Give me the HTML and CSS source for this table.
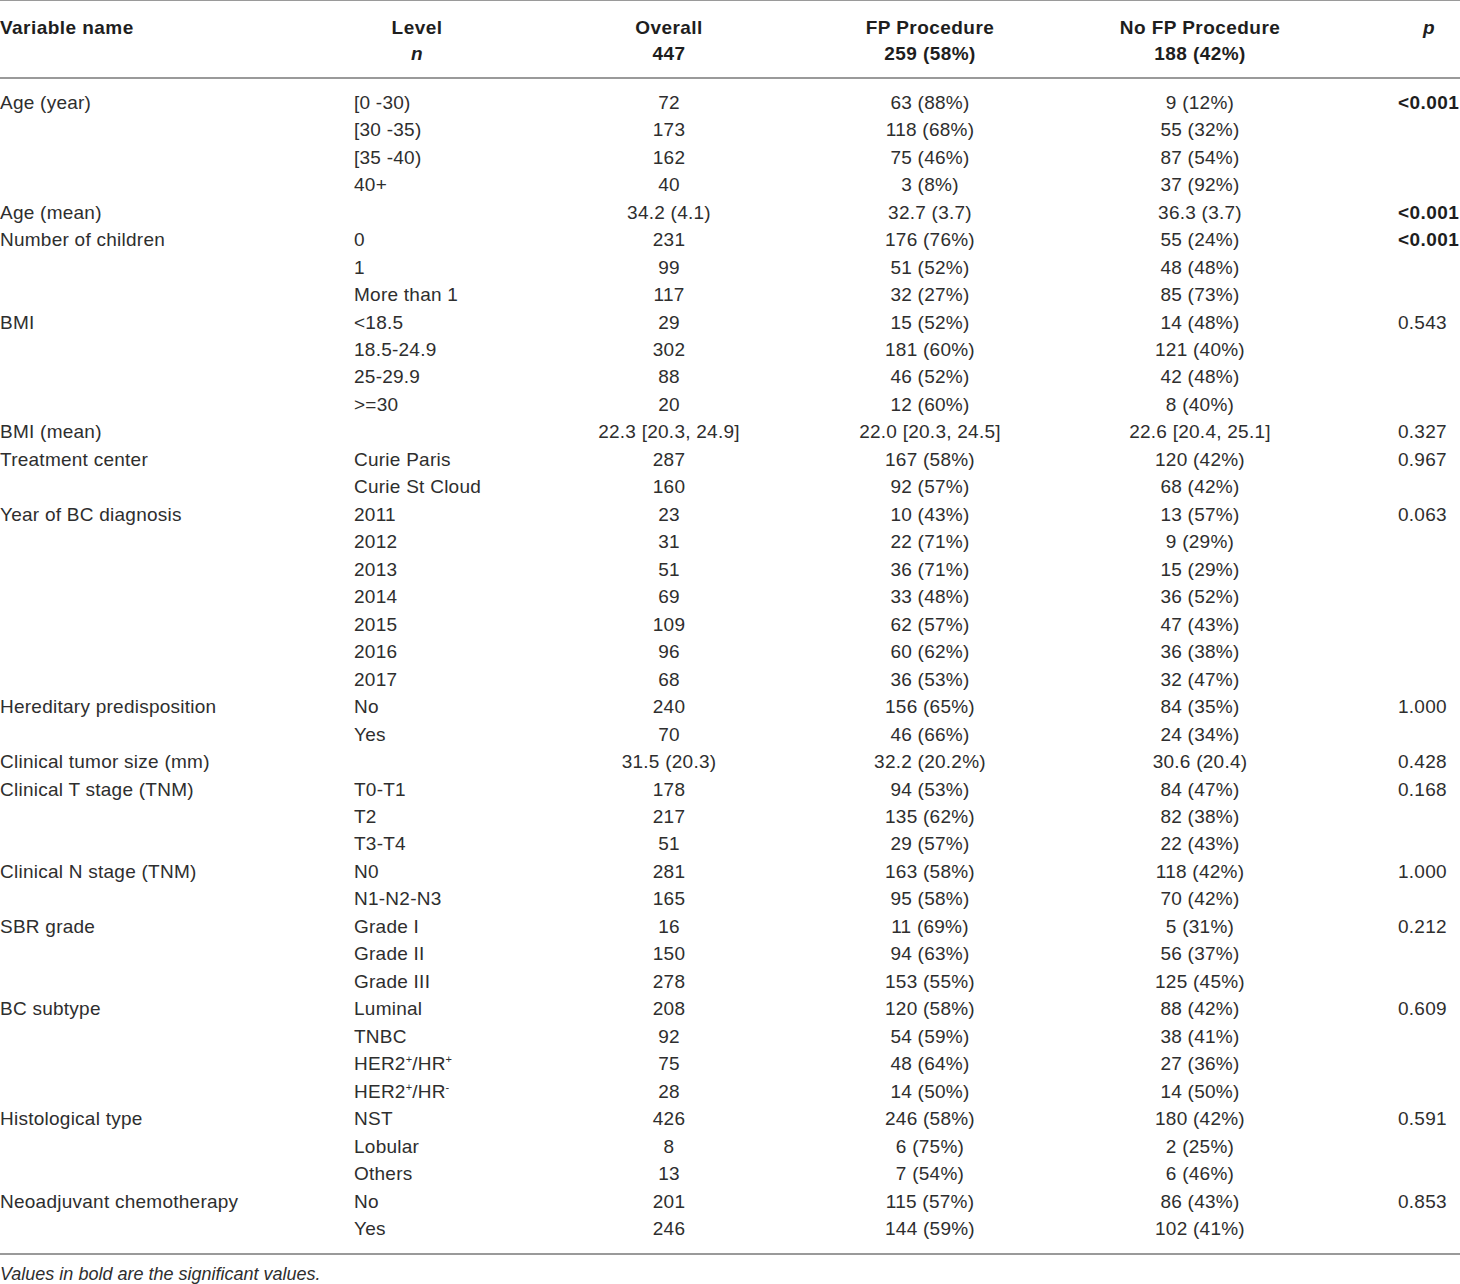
FILE: index.html
```html
<!DOCTYPE html>
<html>
<head>
<meta charset="utf-8">
<link rel="stylesheet" href="styles.css">
</head>
<body>
<div class="table">
  <div class="thead">
    <div class="row">
      <div class="c1 b">Variable name</div>
      <div class="c2 b hc">Level</div>
      <div class="c3 b">Overall</div>
      <div class="c4 b">FP Procedure</div>
      <div class="c5 b">No FP Procedure</div>
      <div class="c6 b hc"><i>p</i></div>
    </div>
    <div class="row">
      <div class="c1"></div>
      <div class="c2 b hc"><i>n</i></div>
      <div class="c3 b">447</div>
      <div class="c4 b">259 (58%)</div>
      <div class="c5 b">188 (42%)</div>
      <div class="c6"></div>
    </div>
  </div>
  <div class="tbody">
    <div class="row"><div class="c1">Age (year)</div><div class="c2">[0 -30)</div><div class="c3">72</div><div class="c4">63 (88%)</div><div class="c5">9 (12%)</div><div class="c6 b">&lt;0.001</div></div>
    <div class="row"><div class="c1"></div><div class="c2">[30 -35)</div><div class="c3">173</div><div class="c4">118 (68%)</div><div class="c5">55 (32%)</div><div class="c6"></div></div>
    <div class="row"><div class="c1"></div><div class="c2">[35 -40)</div><div class="c3">162</div><div class="c4">75 (46%)</div><div class="c5">87 (54%)</div><div class="c6"></div></div>
    <div class="row"><div class="c1"></div><div class="c2">40+</div><div class="c3">40</div><div class="c4">3 (8%)</div><div class="c5">37 (92%)</div><div class="c6"></div></div>
    <div class="row"><div class="c1">Age (mean)</div><div class="c2"></div><div class="c3">34.2 (4.1)</div><div class="c4">32.7 (3.7)</div><div class="c5">36.3 (3.7)</div><div class="c6 b">&lt;0.001</div></div>
    <div class="row"><div class="c1">Number of children</div><div class="c2">0</div><div class="c3">231</div><div class="c4">176 (76%)</div><div class="c5">55 (24%)</div><div class="c6 b">&lt;0.001</div></div>
    <div class="row"><div class="c1"></div><div class="c2">1</div><div class="c3">99</div><div class="c4">51 (52%)</div><div class="c5">48 (48%)</div><div class="c6"></div></div>
    <div class="row"><div class="c1"></div><div class="c2">More than 1</div><div class="c3">117</div><div class="c4">32 (27%)</div><div class="c5">85 (73%)</div><div class="c6"></div></div>
    <div class="row"><div class="c1">BMI</div><div class="c2">&lt;18.5</div><div class="c3">29</div><div class="c4">15 (52%)</div><div class="c5">14 (48%)</div><div class="c6">0.543</div></div>
    <div class="row"><div class="c1"></div><div class="c2">18.5-24.9</div><div class="c3">302</div><div class="c4">181 (60%)</div><div class="c5">121 (40%)</div><div class="c6"></div></div>
    <div class="row"><div class="c1"></div><div class="c2">25-29.9</div><div class="c3">88</div><div class="c4">46 (52%)</div><div class="c5">42 (48%)</div><div class="c6"></div></div>
    <div class="row"><div class="c1"></div><div class="c2">&gt;=30</div><div class="c3">20</div><div class="c4">12 (60%)</div><div class="c5">8 (40%)</div><div class="c6"></div></div>
    <div class="row"><div class="c1">BMI (mean)</div><div class="c2"></div><div class="c3">22.3 [20.3, 24.9]</div><div class="c4">22.0 [20.3, 24.5]</div><div class="c5">22.6 [20.4, 25.1]</div><div class="c6">0.327</div></div>
    <div class="row"><div class="c1">Treatment center</div><div class="c2">Curie Paris</div><div class="c3">287</div><div class="c4">167 (58%)</div><div class="c5">120 (42%)</div><div class="c6">0.967</div></div>
    <div class="row"><div class="c1"></div><div class="c2">Curie St Cloud</div><div class="c3">160</div><div class="c4">92 (57%)</div><div class="c5">68 (42%)</div><div class="c6"></div></div>
    <div class="row"><div class="c1">Year of BC diagnosis</div><div class="c2">2011</div><div class="c3">23</div><div class="c4">10 (43%)</div><div class="c5">13 (57%)</div><div class="c6">0.063</div></div>
    <div class="row"><div class="c1"></div><div class="c2">2012</div><div class="c3">31</div><div class="c4">22 (71%)</div><div class="c5">9 (29%)</div><div class="c6"></div></div>
    <div class="row"><div class="c1"></div><div class="c2">2013</div><div class="c3">51</div><div class="c4">36 (71%)</div><div class="c5">15 (29%)</div><div class="c6"></div></div>
    <div class="row"><div class="c1"></div><div class="c2">2014</div><div class="c3">69</div><div class="c4">33 (48%)</div><div class="c5">36 (52%)</div><div class="c6"></div></div>
    <div class="row"><div class="c1"></div><div class="c2">2015</div><div class="c3">109</div><div class="c4">62 (57%)</div><div class="c5">47 (43%)</div><div class="c6"></div></div>
    <div class="row"><div class="c1"></div><div class="c2">2016</div><div class="c3">96</div><div class="c4">60 (62%)</div><div class="c5">36 (38%)</div><div class="c6"></div></div>
    <div class="row"><div class="c1"></div><div class="c2">2017</div><div class="c3">68</div><div class="c4">36 (53%)</div><div class="c5">32 (47%)</div><div class="c6"></div></div>
    <div class="row"><div class="c1">Hereditary predisposition</div><div class="c2">No</div><div class="c3">240</div><div class="c4">156 (65%)</div><div class="c5">84 (35%)</div><div class="c6">1.000</div></div>
    <div class="row"><div class="c1"></div><div class="c2">Yes</div><div class="c3">70</div><div class="c4">46 (66%)</div><div class="c5">24 (34%)</div><div class="c6"></div></div>
    <div class="row"><div class="c1">Clinical tumor size (mm)</div><div class="c2"></div><div class="c3">31.5 (20.3)</div><div class="c4">32.2 (20.2%)</div><div class="c5">30.6 (20.4)</div><div class="c6">0.428</div></div>
    <div class="row"><div class="c1">Clinical T stage (TNM)</div><div class="c2">T0-T1</div><div class="c3">178</div><div class="c4">94 (53%)</div><div class="c5">84 (47%)</div><div class="c6">0.168</div></div>
    <div class="row"><div class="c1"></div><div class="c2">T2</div><div class="c3">217</div><div class="c4">135 (62%)</div><div class="c5">82 (38%)</div><div class="c6"></div></div>
    <div class="row"><div class="c1"></div><div class="c2">T3-T4</div><div class="c3">51</div><div class="c4">29 (57%)</div><div class="c5">22 (43%)</div><div class="c6"></div></div>
    <div class="row"><div class="c1">Clinical N stage (TNM)</div><div class="c2">N0</div><div class="c3">281</div><div class="c4">163 (58%)</div><div class="c5">118 (42%)</div><div class="c6">1.000</div></div>
    <div class="row"><div class="c1"></div><div class="c2">N1-N2-N3</div><div class="c3">165</div><div class="c4">95 (58%)</div><div class="c5">70 (42%)</div><div class="c6"></div></div>
    <div class="row"><div class="c1">SBR grade</div><div class="c2">Grade I</div><div class="c3">16</div><div class="c4">11 (69%)</div><div class="c5">5 (31%)</div><div class="c6">0.212</div></div>
    <div class="row"><div class="c1"></div><div class="c2">Grade II</div><div class="c3">150</div><div class="c4">94 (63%)</div><div class="c5">56 (37%)</div><div class="c6"></div></div>
    <div class="row"><div class="c1"></div><div class="c2">Grade III</div><div class="c3">278</div><div class="c4">153 (55%)</div><div class="c5">125 (45%)</div><div class="c6"></div></div>
    <div class="row"><div class="c1">BC subtype</div><div class="c2">Luminal</div><div class="c3">208</div><div class="c4">120 (58%)</div><div class="c5">88 (42%)</div><div class="c6">0.609</div></div>
    <div class="row"><div class="c1"></div><div class="c2">TNBC</div><div class="c3">92</div><div class="c4">54 (59%)</div><div class="c5">38 (41%)</div><div class="c6"></div></div>
    <div class="row"><div class="c1"></div><div class="c2">HER2<sup>+</sup>/HR<sup>+</sup></div><div class="c3">75</div><div class="c4">48 (64%)</div><div class="c5">27 (36%)</div><div class="c6"></div></div>
    <div class="row"><div class="c1"></div><div class="c2">HER2<sup>+</sup>/HR<sup>-</sup></div><div class="c3">28</div><div class="c4">14 (50%)</div><div class="c5">14 (50%)</div><div class="c6"></div></div>
    <div class="row"><div class="c1">Histological type</div><div class="c2">NST</div><div class="c3">426</div><div class="c4">246 (58%)</div><div class="c5">180 (42%)</div><div class="c6">0.591</div></div>
    <div class="row"><div class="c1"></div><div class="c2">Lobular</div><div class="c3">8</div><div class="c4">6 (75%)</div><div class="c5">2 (25%)</div><div class="c6"></div></div>
    <div class="row"><div class="c1"></div><div class="c2">Others</div><div class="c3">13</div><div class="c4">7 (54%)</div><div class="c5">6 (46%)</div><div class="c6"></div></div>
    <div class="row"><div class="c1">Neoadjuvant chemotherapy</div><div class="c2">No</div><div class="c3">201</div><div class="c4">115 (57%)</div><div class="c5">86 (43%)</div><div class="c6">0.853</div></div>
    <div class="row"><div class="c1"></div><div class="c2">Yes</div><div class="c3">246</div><div class="c4">144 (59%)</div><div class="c5">102 (41%)</div><div class="c6"></div></div>
  </div>
  <div class="note">Values in bold are the significant values.</div>
</div>
</body>
</html>
```

FILE: styles.css
```css
html, body {
  margin: 0;
  padding: 0;
  background: #fff;
}
body {
  font-family: "Liberation Sans", Arial, Helvetica, sans-serif;
  font-size: 19px;
  letter-spacing: 0.25px;
  color: #2e2e2e;
  width: 1460px;
}
.table {
  width: 1460px;
}
.thead {
  border-top: 1.5px solid #9a9a9a;
  border-bottom: 2px solid #9a9a9a;
  padding: 13.5px 0 9px 0;
}
.thead .row {
  line-height: 26.5px;
}
.tbody {
  padding: 10.3px 0 11px 0;
  border-bottom: 2px solid #9a9a9a;
}
.row {
  display: grid;
  grid-template-columns: 354px 126px 58px 262px 260px 5px 270px 63px 62px;
  line-height: 27.463px;
  white-space: nowrap;
}
.row > div {
  min-width: 0;
}
.c1 { grid-column: 1; text-align: left; }
.c2 { grid-column: 2; text-align: left; }
.c3 { grid-column: 4; text-align: center; }
.c4 { grid-column: 5; text-align: center; }
.c5 { grid-column: 7; text-align: center; }
.c6 { grid-column: 9; text-align: left; }
.hc { text-align: center; }
.b {
  font-weight: bold;
  letter-spacing: 0.45px;
  color: #1e1e1e;
}
sup {
  font-size: 11px;
  line-height: 0;
  vertical-align: 7px;
  letter-spacing: 0;
}
.note {
  font-style: italic;
  font-size: 18px;
  letter-spacing: 0;
  padding-top: 6px;
  line-height: 27px;
}
```
